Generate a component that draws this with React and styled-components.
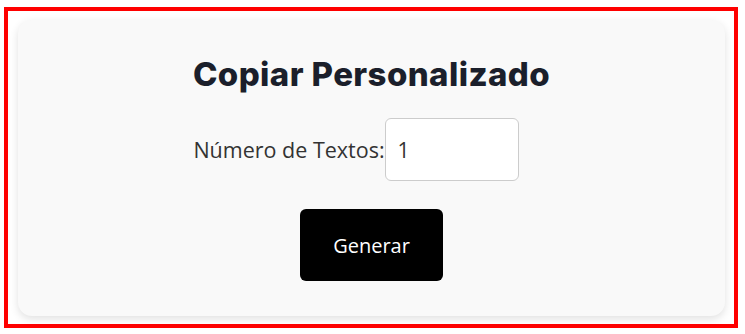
import React, { useState } from "react";
import styled, { createGlobalStyle } from "styled-components";

const GlobalStyle = createGlobalStyle`
  body {
    margin: 0;
    background: #fff;
  }
`;

const Frame = styled.div`
  box-sizing: border-box;
  width: 734px;
  height: 321px;
  margin: 7px 0 0 4px;
  border: 4px solid #ff0000;
  padding: 9px 9px 8px 10px;
`;

const Card = styled.div`
  box-sizing: border-box;
  height: 100%;
  background: #f9f9f9;
  border-radius: 14px;
  box-shadow: 0 3px 8px rgba(0, 0, 0, 0.12);
  display: flex;
  flex-direction: column;
  align-items: center;
  padding-top: 33px;
`;

const Title = styled.h1`
  margin: 0;
  font-family: Inter, "Liberation Sans", sans-serif;
  font-weight: 800;
  font-size: 33px;
  line-height: 42px;
  letter-spacing: 0.4px;
  color: #1b1f2b;
`;

const Row = styled.div`
  display: flex;
  align-items: center;
  margin-top: 23px;
  padding-right: 31px;
`;

const Label = styled.label`
  font-family: "Open Sans", "Liberation Sans", sans-serif;
  font-size: 21.5px;
  color: #333;
  margin-right: 0;
`;

const Input = styled.input`
  box-sizing: border-box;
  width: 134px;
  height: 63px;
  border: 1px solid #ccc;
  border-radius: 6px;
  background: #fff;
  padding: 0 12px;
  font-family: "Open Sans", "Liberation Sans", sans-serif;
  font-size: 21px;
  color: #333;
  outline: none;
`;

const Button = styled.button`
  margin-top: 28px;
  width: 143px;
  height: 72px;
  border: none;
  border-radius: 6px;
  background: #000;
  color: #fff;
  font-family: "Open Sans", "Liberation Sans", sans-serif;
  font-size: 20px;
  cursor: pointer;
`;

const App = () => {
  const [count, setCount] = useState("1");

  return (
    <>
      <GlobalStyle />
      <Frame>
        <Card>
          <Title>Copiar Personalizado</Title>
          <Row>
            <Label htmlFor="count">Número de Textos:</Label>
            <Input
              id="count"
              type="text"
              value={count}
              onChange={(e) => setCount(e.target.value)}
            />
          </Row>
          <Button>Generar</Button>
        </Card>
      </Frame>
    </>
  );
};

export default App;
